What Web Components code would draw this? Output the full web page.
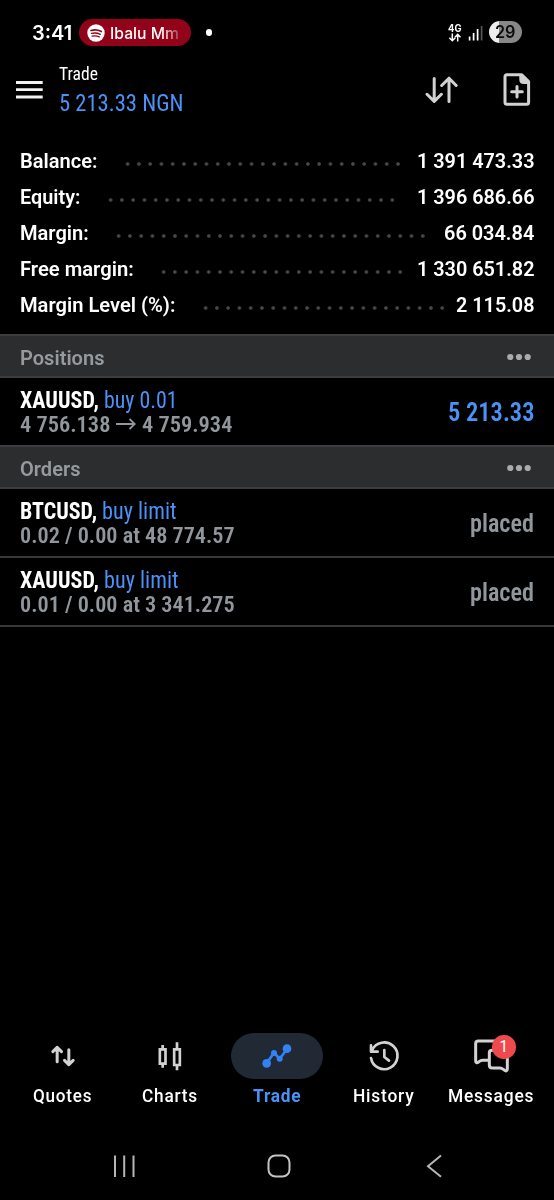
<!DOCTYPE html>
<html lang="en">
<head>
<meta charset="utf-8">
<title>Trade</title>
<style>
    body {
        margin: 0;
        background: #000;
        color: #fff;
        font-family: Roboto, "Liberation Sans", sans-serif;
    }
</style>
</head>
<body>
<trade-app>
    <status-bar slot="top"></status-bar>
    <app-bar slot="top">
        <fit-text slot="title" width="39">Trade</fit-text>
        <fit-text slot="profit" width="124.5">5 213.33 NGN</fit-text>
    </app-bar>
    <account-summary>
        <summary-row dots="25"><fit-text slot="label" width="77.4">Balance:</fit-text><fit-text width="117.5">1 391 473.33</fit-text></summary-row>
        <summary-row dots="26"><fit-text slot="label" width="60.4">Equity:</fit-text><fit-text width="117.5">1 396 686.66</fit-text></summary-row>
        <summary-row dots="28"><fit-text slot="label" width="68.7">Margin:</fit-text><fit-text width="90.3">66 034.84</fit-text></summary-row>
        <summary-row dots="22"><fit-text slot="label" width="113.7">Free margin:</fit-text><fit-text width="117.5">1 330 651.82</fit-text></summary-row>
        <summary-row dots="22"><fit-text slot="label" width="155.4">Margin Level (%):</fit-text><fit-text width="78.5">2 115.08</fit-text></summary-row>
    </account-summary>
    <section-header><fit-text width="84.5">Positions</fit-text></section-header>
    <trade-row class="last profit">
        <fit-text slot="symbol" width="79">XAUUSD,</fit-text>
        <fit-text slot="action" width="73.6">buy 0.01</fit-text>
        <fit-text slot="detail" width="90.4">4 756.138</fit-text>
        <price-arrow slot="detail"></price-arrow>
        <fit-text slot="detail" width="90.4">4 759.934</fit-text>
        <fit-text width="86.5">5 213.33</fit-text>
    </trade-row>
    <section-header><fit-text width="60.5">Orders</fit-text></section-header>
    <trade-row>
        <fit-text slot="symbol" width="77">BTCUSD,</fit-text>
        <fit-text slot="action" width="74.6">buy limit</fit-text>
        <fit-text slot="detail" width="214.7">0.02 / 0.00 at 48 774.57</fit-text>
        <fit-text width="64">placed</fit-text>
    </trade-row>
    <trade-row>
        <fit-text slot="symbol" width="79">XAUUSD,</fit-text>
        <fit-text slot="action" width="74.6">buy limit</fit-text>
        <fit-text slot="detail" width="214.7">0.01 / 0.00 at 3 341.275</fit-text>
        <fit-text width="64">placed</fit-text>
    </trade-row>
    <tab-bar slot="bottom">
        <tab-item>
            <svg slot="icon" width="48" height="46" viewBox="115.5 39 144 138" fill="none" stroke="#d2d2d2" stroke-width="9" stroke-linecap="round" stroke-linejoin="round">
                <path d="M170 125V82M157 95l13-13 13 13M205 89v45M192 121l13 13 13-13"/>
            </svg>
            <fit-text width="59.3">Quotes</fit-text>
        </tab-item>
        <tab-item>
            <svg slot="icon" width="48" height="46" viewBox="437.5 39 144 138" fill="none" stroke="#d2d2d2" stroke-width="8">
                <path d="M479 88h17v43h-17zM487.5 75v13M487.5 131v12M522 88h17v47h-17zM530.5 67v21M530.5 135v16"/>
            </svg>
            <fit-text width="56">Charts</fit-text>
        </tab-item>
        <tab-item active>
            <svg slot="icon" width="48" height="46" viewBox="759 39 144 138" fill="#3282f6">
                <path d="M800 130l22-32 17 19 22-30" fill="none" stroke="#3282f6" stroke-width="8"/>
                <circle cx="800" cy="130" r="13"/>
                <circle cx="822" cy="99" r="9"/>
                <circle cx="839" cy="116" r="9"/>
                <circle cx="861" cy="86" r="13"/>
            </svg>
            <fit-text width="48.5">Trade</fit-text>
        </tab-item>
        <tab-item>
            <svg slot="icon" width="48" height="46" viewBox="249 39 144 138" fill="none" stroke="#d2d2d2" stroke-width="8" stroke-linecap="round" stroke-linejoin="round">
                <path d="M282 114a40 40 0 1 0 3-23M282 76v19h20M322 90v21l14 11"/>
            </svg>
            <fit-text width="61.5">History</fit-text>
        </tab-item>
        <tab-item>
            <svg slot="icon" width="48" height="46" viewBox="570 39 144 138" fill="none" stroke="#d2d2d2" stroke-width="9" stroke-linecap="round" stroke-linejoin="round">
                <path d="M634 121h-17q-6 0-11 4-10 7-10-2V71q0-8 8-8h62"/>
                <path d="M691 98v48q0 12-11 3-6-5-12-5h-22q-9 0-9-9V99q0-8 8-8h38q8 0 8 8"/>
            </svg>
            <tab-badge slot="icon">1</tab-badge>
            <fit-text width="86.3">Messages</fit-text>
        </tab-item>
    </tab-bar>
    <system-nav slot="bottom"></system-nav>
</trade-app>

<script>
class BaseElement extends HTMLElement {
    constructor() {
        super();
        this.attachShadow({mode: "open"});
        this.shadowRoot.innerHTML = this.render();
    }
    render() {
        return "<slot></slot>";
    }
}

customElements.define("trade-app", class extends BaseElement {
    render() {
        return `
            <style>
                :host {
                    display: flex;
                    flex-direction: column;
                    width: 554px;
                    height: 1200px;
                    overflow: hidden;
                }
                main { flex: 1; }
            </style>
            <slot name="top"></slot>
            <main><slot></slot></main>
            <slot name="bottom"></slot>
        `;
    }
});

customElements.define("status-bar", class extends BaseElement {
    render() {
        return `
            <style>
                :host {
                    display: flex;
                    align-items: center;
                    box-sizing: border-box;
                    height: 64px;
                    padding: 1px 32px 0 31.5px;
                    font-family: Inter, "Liberation Sans", sans-serif;
                    font-weight: 600;
                }
                .time { font-size: 19.5px; }
                .media {
                    display: flex;
                    align-items: center;
                    gap: 5.5px;
                    box-sizing: border-box;
                    width: 112px;
                    height: 27px;
                    margin-left: 7.2px;
                    padding-left: 8px;
                    border-radius: 14px;
                    background: #92031a;
                    font-size: 16.5px;
                    font-weight: 550;
                }
                .media fit-text {
                    -webkit-mask-image: linear-gradient(90deg, #000 74%, transparent 108%);
                    mask-image: linear-gradient(90deg, #000 74%, transparent 108%);
                }
                .dot {
                    width: 6.5px;
                    height: 6.5px;
                    margin-left: 15px;
                    border-radius: 50%;
                    background: #fff;
                }
                .network {
                    display: flex;
                    flex-direction: column;
                    align-items: center;
                    width: 14px;
                    margin-left: auto;
                    font-size: 10px;
                    line-height: 9px;
                    font-weight: 700;
                }
                .signal { margin: 0 6px; }
                .battery {
                    display: flex;
                    align-items: center;
                    justify-content: center;
                    width: 33px;
                    height: 22px;
                    margin-top: -1px;
                    border-radius: 11px;
                    background: linear-gradient(90deg, #ededed 29%, #878787 29%);
                    color: #0b0b0b;
                    font-size: 17px;
                }
            </style>
            <fit-text class="time" width="40.3">3:41</fit-text>
            <div class="media">
                <svg width="18" height="18" viewBox="0 0 18 18" fill="none" stroke="#92031a" stroke-linecap="round">
                    <circle cx="9" cy="9" r="8.7" fill="#fff" stroke="none"/>
                    <path d="M4 6.5q5.5-1.5 10.3 1" stroke-width="1.7"/>
                    <path d="M4.5 9.4q4.7-1.2 8.8.9" stroke-width="1.4"/>
                    <path d="M5 12.1q3.9-.9 7.3.8" stroke-width="1.2"/>
                </svg>
                <fit-text width="69">Ibalu Mm</fit-text>
            </div>
            <div class="dot"></div>
            <div class="network">
                <fit-text width="13.5">4G</fit-text>
                <svg width="14" height="9" viewBox="0 0 14 9" fill="none" stroke="#fff" stroke-width="1.5">
                    <path d="M4.3 .5v7M1.3 4.7l3 3 3-3M9.7 8.5v-7M6.9 4.3l2.8-2.9 2.8 2.9"/>
                </svg>
            </div>
            <div class="signal">
                <svg width="15" height="22" viewBox="0 0 15 22" stroke="#fff" stroke-width="1.7" style="display:block">
                    <path d="M1.6 14.5v4M5.6 11v7.5M9.6 7v11.5"/>
                    <path d="M13.6 4v14.5" stroke="#555"/>
                </svg>
            </div>
            <div class="battery"><fit-text width="20.5">29</fit-text></div>
        `;
    }
});

customElements.define("app-bar", class extends BaseElement {
    render() {
        return `
            <style>
                :host {
                    display: flex;
                    box-sizing: border-box;
                    height: 79px;
                    padding: 0 23px 0 16px;
                }
                svg { display: block; }
                .menu { margin-top: 16px; }
                .titles { margin-left: 15.5px; flex: 1; }
                .title {
                    height: 21px;
                    line-height: 21px;
                    font-size: 18.5px;
                    font-stretch: 75%;
                }
                .profit {
                    height: 29px;
                    margin-top: 4px;
                    line-height: 29px;
                    font-size: 24px;
                    font-stretch: 75%;
                    color: #4b92f8;
                }
                .swap { margin: 11px 45px 0 0; }
                .add { margin-top: 9px; }
            </style>
            <svg class="menu" width="27" height="20" viewBox="0 0 27 20" stroke="#f2f2f2" stroke-width="2.8">
                <path d="M0 2.5h26.7M0 9.7h26.7M0 17h26.7"/>
            </svg>
            <div class="titles">
                <div class="title"><slot name="title"></slot></div>
                <div class="profit"><slot name="profit"></slot></div>
            </div>
            <svg class="swap" width="33" height="29" viewBox="0 0 33 29" fill="none" stroke="#d2d2d2" stroke-width="3" stroke-linecap="round" stroke-linejoin="round">
                <path d="M9.2 3.5v22.5M2 19.3l7.2 7.1 7.2-7.1M24 26.5V3.2M16.7 10.5l7.3-7.3 7.2 7.3"/>
            </svg>
            <svg class="add" width="28" height="34" viewBox="0 0 28 34" fill="none" stroke="#d2d2d2" stroke-width="3" stroke-linecap="round" stroke-linejoin="round">
                <path d="M4 1.8h14.8l6.8 6.8v20.6q0 2-2 2H4q-2 0-2-2V3.8q0-2 2-2z"/>
                <path d="M17.8 2.5v4q0 3 3 3h4.5z" fill="#d2d2d2"/>
                <path d="M14 13.5v10.5M8.7 18.7h10.6"/>
            </svg>
        `;
    }
});

customElements.define("account-summary", class extends BaseElement {
    render() {
        return `
            <style>
                :host {
                    display: block;
                    padding: 0 20px 11px 20px;
                    font-size: 20px;
                    font-weight: 600;
                }
            </style>
            <slot></slot>
        `;
    }
});

customElements.define("summary-row", class extends BaseElement {
    render() {
        return `
            <style>
                :host {
                    display: flex;
                    justify-content: space-between;
                    height: 36px;
                    line-height: 36px;
                }
                .label { display: flex; gap: 24.2px; }
                .dots {
                    height: 4px;
                    margin-top: 19.3px;
                    width: calc(var(--dots) * 11.28px);
                    background: radial-gradient(circle at center, #4a4a4a 1.3px, transparent 2.2px) 0 0 / 11.28px 4px repeat-x;
                }
            </style>
            <div class="label"><slot name="label"></slot><div class="dots"></div></div>
            <slot></slot>
        `;
    }
    connectedCallback() {
        this.style.setProperty("--dots", this.getAttribute("dots"));
    }
});

customElements.define("section-header", class extends BaseElement {
    render() {
        return `
            <style>
                :host {
                    display: flex;
                    align-items: center;
                    justify-content: space-between;
                    box-sizing: border-box;
                    height: 44px;
                    padding: 3px 22px 0 20px;
                    border: solid #3c3d40;
                    border-width: 2px 0;
                    background: #2c2d2f;
                    color: #959a9f;
                    font-size: 20px;
                    font-weight: 600;
                }
                svg { margin-top: -2px; }
            </style>
            <slot></slot>
            <svg width="26" height="8" viewBox="0 0 26 8" fill="#a9abae">
                <circle cx="4.3" cy="4" r="3.1"/><circle cx="13" cy="4" r="3.1"/><circle cx="21.7" cy="4" r="3.1"/>
            </svg>
        `;
    }
});

customElements.define("trade-row", class extends BaseElement {
    render() {
        return `
            <style>
                :host {
                    display: flex;
                    justify-content: space-between;
                    box-sizing: border-box;
                    height: 69px;
                    padding: 10px 19.7px 0 20px;
                    border-bottom: 2px solid #37383b;
                    font-stretch: 75%;
                }
                :host(.last) {
                    height: 67px;
                    border-bottom: 0;
                }
                .line { display: flex; }
                .head {
                    gap: 4.8px;
                    height: 25px;
                    font-size: 23.5px;
                    line-height: 25px;
                }
                .symbol { font-weight: 700; }
                .action { color: #4b92f8; }
                .detail {
                    gap: 6px;
                    height: 23px;
                    font-size: 22.5px;
                    font-weight: 600;
                    line-height: 23px;
                    color: #91969c;
                }
                .value {
                    height: 48px;
                    line-height: 48px;
                    font-size: 25.8px;
                    font-weight: 650;
                    color: #91969c;
                }
                :host(.profit) .value { color: #4b92f8; }
            </style>
            <div>
                <div class="line head">
                    <span class="symbol"><slot name="symbol"></slot></span>
                    <span class="action"><slot name="action"></slot></span>
                </div>
                <div class="line detail"><slot name="detail"></slot></div>
            </div>
            <div class="value"><slot></slot></div>
        `;
    }
});

customElements.define("price-arrow", class extends BaseElement {
    render() {
        return `
            <style>
                :host { display: flex; width: 20px; padding-top: 5px; }
            </style>
            <svg width="20" height="12" viewBox="0 0 20 12" fill="none" stroke="#91969c" stroke-width="1.8">
                <path d="M0 6h19M13.5 1l5.3 5-5.3 5"/>
            </svg>
        `;
    }
});

customElements.define("tab-bar", class extends BaseElement {
    render() {
        return `
            <style>
                :host {
                    display: flex;
                    box-sizing: border-box;
                    height: 98px;
                    padding: 0 9.5px;
                }
            </style>
            <slot></slot>
        `;
    }
});

customElements.define("tab-item", class extends BaseElement {
    render() {
        return `
            <style>
                :host {
                    display: flex;
                    flex: 1;
                    flex-direction: column;
                    align-items: center;
                    gap: 7px;
                    font-size: 17.5px;
                    font-weight: 500;
                    line-height: 21px;
                    letter-spacing: 0.8px;
                }
                .pill {
                    position: relative;
                    display: flex;
                    justify-content: center;
                    width: 92px;
                    height: 46px;
                    border-radius: 23px;
                }
                :host([active]) { color: #4b92f8; font-weight: 700; }
                :host([active]) .pill { background: #212934; }
            </style>
            <div class="pill"><slot name="icon"></slot></div>
            <slot></slot>
        `;
    }
});

customElements.define("tab-badge", class extends BaseElement {
    render() {
        return `
            <style>
                :host {
                    position: absolute;
                    top: 2px;
                    left: 47px;
                    width: 23.5px;
                    height: 23.5px;
                    border-radius: 50%;
                    background: #ee4a4e;
                    color: #fff;
                    font-size: 16px;
                    font-weight: 400;
                    line-height: 24px;
                    letter-spacing: 0;
                    text-align: center;
                }
            </style>
            <slot></slot>
        `;
    }
});

customElements.define("system-nav", class extends BaseElement {
    render() {
        return `
            <style>
                :host {
                    display: grid;
                    grid-template-columns: repeat(3, 1fr);
                    place-items: center;
                    box-sizing: border-box;
                    height: 69px;
                    padding: 0 42px 0 46px;
                }
            </style>
            <svg width="24" height="24" viewBox="0 0 24 24" stroke="#b5b5b5" stroke-width="2">
                <path d="M3 1.5v21.5M12.2 1.5v21.5M21.5 1.5v21.5"/>
            </svg>
            <svg width="24" height="24" viewBox="0 0 24 24" fill="none" stroke="#c4c4c4" stroke-width="2">
                <rect x="1.5" y="1.5" width="21" height="21" rx="7"/>
            </svg>
            <svg width="24" height="24" viewBox="0 0 24 24" fill="none" stroke="#b5b5b5" stroke-width="2">
                <path d="M19 1.5L6 12.2l13 10.6"/>
            </svg>
        `;
    }
});

// Text squeezed or stretched to a fixed width. Defined last, so that
// the fonts of the surrounding elements are in place when it measures.
customElements.define("fit-text", class extends BaseElement {
    render() {
        return `
            <style>
                :host {
                    display: inline-block;
                    white-space: nowrap;
                }
                span {
                    display: inline-block;
                    transform-origin: 0 50%;
                }
            </style>
            <span><slot></slot></span>
        `;
    }
    connectedCallback() {
        const span = this.shadowRoot.querySelector("span");
        const width = parseFloat(this.getAttribute("width"));
        const natural = span.getBoundingClientRect().width;
        this.style.width = width + "px";
        if (natural) span.style.transform = `scaleX(${width / natural})`;
    }
});
</script>
</body>
</html>
